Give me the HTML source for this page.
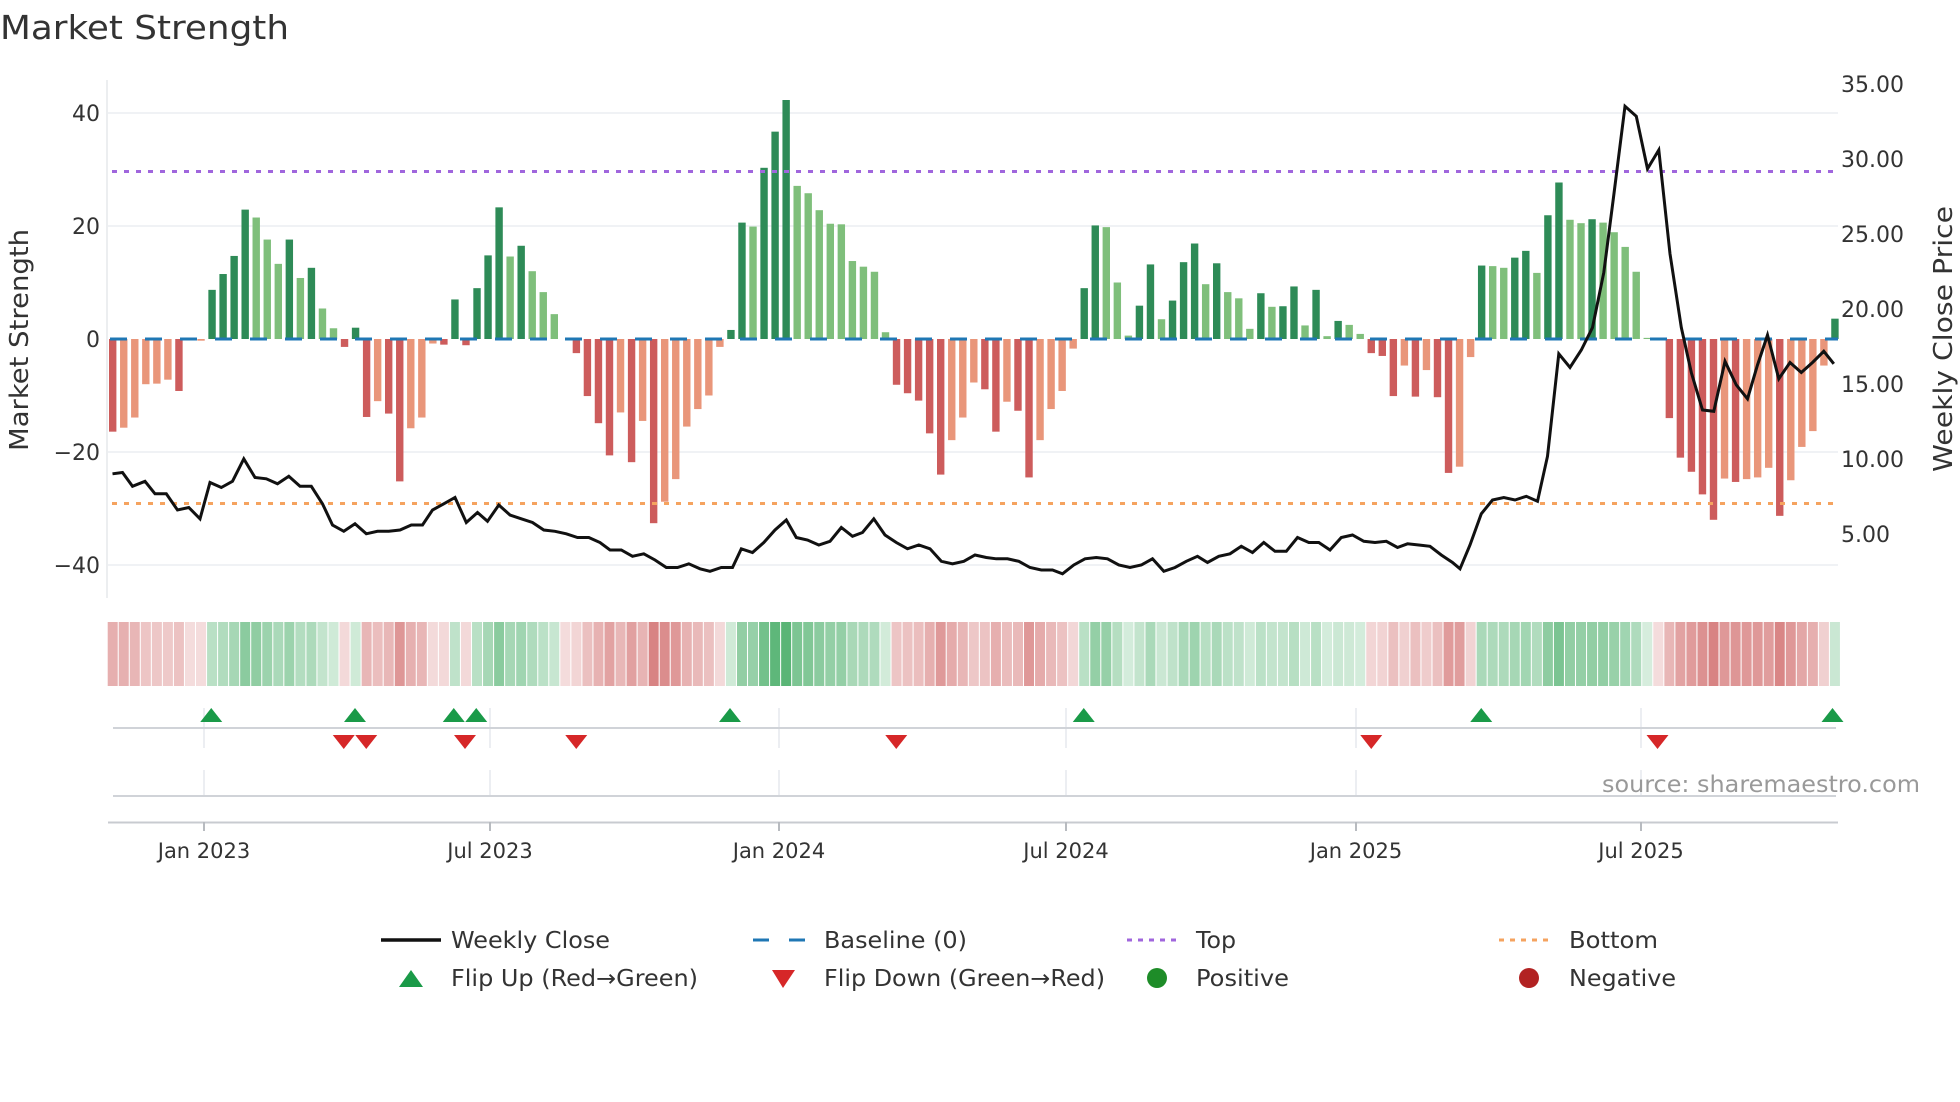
<!DOCTYPE html>
<html><head><meta charset="utf-8"><style>
html,body{margin:0;padding:0;background:#fff;}
svg{display:block;font-family:"DejaVu Sans","Liberation Sans",sans-serif;}
</style></head><body>
<svg id="s" width="1960" height="1102" viewBox="0 0 1960 1102" xmlns="http://www.w3.org/2000/svg">
<rect width="1960" height="1102" fill="#fff"/>
<text x="0" y="39" font-size="33" fill="#333" textLength="289" lengthAdjust="spacingAndGlyphs">Market Strength</text>
<g stroke="#eceef2" stroke-width="1.5">
<line x1="108" y1="113" x2="1838" y2="113"/>
<line x1="108" y1="226" x2="1838" y2="226"/>
<line x1="108" y1="452" x2="1838" y2="452"/>
<line x1="108" y1="565" x2="1838" y2="565"/>
</g>
<line x1="107" y1="80" x2="107" y2="598" stroke="#e6e8ec" stroke-width="1.5"/>
<g font-size="22" fill="#333" text-anchor="end">
<text x="100" y="121">40</text><text x="100" y="234">20</text><text x="100" y="347">0</text>
<text x="100" y="460">−20</text><text x="100" y="573">−40</text>
</g>
<g font-size="22" fill="#333">
<text x="1841" y="92">35.00</text><text x="1841" y="167">30.00</text><text x="1841" y="242">25.00</text>
<text x="1841" y="317">20.00</text><text x="1841" y="392">15.00</text><text x="1841" y="467">10.00</text>
<text x="1841" y="542">5.00</text>
</g>
<text transform="translate(28,451) rotate(-90)" font-size="26" fill="#333" textLength="222" lengthAdjust="spacingAndGlyphs">Market Strength</text>
<text transform="translate(1952,472) rotate(-90)" font-size="26" fill="#333" textLength="266" lengthAdjust="spacingAndGlyphs">Weekly Close Price</text>
<g id="bars"></g>
<line x1="110" y1="339" x2="1838" y2="339" stroke="#1f77b4" stroke-width="3" stroke-dasharray="17 18"/>
<line x1="112" y1="171.5" x2="1838" y2="171.5" stroke="#a066dd" stroke-width="3" stroke-dasharray="5 7"/>
<line x1="112" y1="503.5" x2="1838" y2="503.5" stroke="#f5a35f" stroke-width="3" stroke-dasharray="5 7"/>
<polyline id="price" fill="none" stroke="#111" stroke-width="3" stroke-linejoin="miter"/>
<g id="heat"></g>
<g stroke="#e6e8ee" stroke-width="1.5">
<line x1="204" y1="708" x2="204" y2="748"/><line x1="490" y1="708" x2="490" y2="748"/><line x1="779" y1="708" x2="779" y2="748"/>
<line x1="1066" y1="708" x2="1066" y2="748"/><line x1="1356" y1="708" x2="1356" y2="748"/><line x1="1641" y1="708" x2="1641" y2="748"/>
<line x1="204" y1="770" x2="204" y2="796"/><line x1="490" y1="770" x2="490" y2="796"/><line x1="779" y1="770" x2="779" y2="796"/>
<line x1="1066" y1="770" x2="1066" y2="796"/><line x1="1356" y1="770" x2="1356" y2="796"/><line x1="1641" y1="770" x2="1641" y2="796"/>
</g>
<line x1="113" y1="728" x2="1836" y2="728" stroke="#d0d3d8" stroke-width="2"/>
<line x1="113" y1="796" x2="1836" y2="796" stroke="#d0d3d8" stroke-width="2"/>
<line x1="108" y1="822.5" x2="1838" y2="822.5" stroke="#c8cbd0" stroke-width="2"/>
<g stroke="#b8bbc0" stroke-width="2">
<line x1="204" y1="822" x2="204" y2="831"/><line x1="490" y1="822" x2="490" y2="831"/><line x1="779" y1="822" x2="779" y2="831"/>
<line x1="1066" y1="822" x2="1066" y2="831"/><line x1="1356" y1="822" x2="1356" y2="831"/><line x1="1641" y1="822" x2="1641" y2="831"/>
</g>
<g id="tri"></g>
<text x="1602" y="792" font-size="23" fill="#999" textLength="318" lengthAdjust="spacingAndGlyphs">source: sharemaestro.com</text>
<g font-size="21" fill="#333" text-anchor="middle">
<text x="204" y="858">Jan 2023</text><text x="490" y="858">Jul 2023</text><text x="779" y="858">Jan 2024</text>
<text x="1066" y="858">Jul 2024</text><text x="1356" y="858">Jan 2025</text><text x="1641" y="858">Jul 2025</text>
</g>
<g font-size="23" fill="#333">
<line x1="381" y1="940" x2="441" y2="940" stroke="#111" stroke-width="3.5"/>
<text x="451" y="948" textLength="159" lengthAdjust="spacingAndGlyphs">Weekly Close</text>
<line x1="753" y1="940" x2="809" y2="940" stroke="#1f77b4" stroke-width="3" stroke-dasharray="16 20"/>
<text x="824" y="948" textLength="143" lengthAdjust="spacingAndGlyphs">Baseline (0)</text>
<line x1="1127" y1="940" x2="1182" y2="940" stroke="#a066dd" stroke-width="3" stroke-dasharray="5 6"/>
<text x="1196" y="948" textLength="40" lengthAdjust="spacingAndGlyphs">Top</text>
<line x1="1499" y1="940" x2="1554" y2="940" stroke="#f5a35f" stroke-width="3" stroke-dasharray="5 6"/>
<text x="1569" y="948" textLength="89" lengthAdjust="spacingAndGlyphs">Bottom</text>
<polygon points="399,987 423,987 411,970" fill="#1a9a48"/>
<text x="451" y="986" textLength="247" lengthAdjust="spacingAndGlyphs">Flip Up (Red→Green)</text>
<polygon points="772,970 795,970 783,988" fill="#d62728"/>
<text x="824" y="986" textLength="281" lengthAdjust="spacingAndGlyphs">Flip Down (Green→Red)</text>
<circle cx="1157" cy="978" r="10" fill="#1e8c28"/>
<text x="1196" y="986" textLength="93" lengthAdjust="spacingAndGlyphs">Positive</text>
<circle cx="1529" cy="978" r="10" fill="#b22222"/>
<text x="1569" y="986" textLength="107" lengthAdjust="spacingAndGlyphs">Negative</text>
</g>
</svg>
<script>
(function(){
var NS="http://www.w3.org/2000/svg";
var D=[["r",-16.4],["l",-15.7],["l",-13.9],["l",-8],["l",-7.9],["l",-7.2],["r",-9.2],["n",0],["l",-0.3],["g",8.7],
["g",11.5],["g",14.7],["g",22.9],["h",21.5],["h",17.6],["h",13.3],["g",17.6],["h",10.8],["g",12.6],["h",5.4],
["h",1.9],["r",-1.4],["g",2],["r",-13.8],["l",-11],["r",-13.2],["r",-25.2],["l",-15.8],["l",-13.9],["l",-0.8],
["r",-1],["g",7],["r",-1.1],["g",9],["g",14.8],["g",23.3],["h",14.6],["g",16.5],["h",12],["h",8.3],
["h",4.4],["n",0],["r",-2.5],["r",-10.1],["r",-14.9],["r",-20.6],["l",-13],["r",-21.8],["l",-14.5],["r",-32.6],
["l",-28.8],["l",-24.8],["l",-15.5],["l",-12.4],["l",-10],["l",-1.4],["g",1.6],["g",20.6],["h",19.9],["g",30.3],
["g",36.7],["g",42.3],["h",27.1],["h",25.8],["h",22.8],["h",20.4],["h",20.3],["h",13.8],["h",12.8],["h",11.9],
["h",1.2],["r",-8.1],["r",-9.6],["r",-10.9],["r",-16.7],["r",-24],["l",-17.9],["l",-13.9],["l",-7.7],["r",-8.9],
["r",-16.4],["l",-11.1],["r",-12.7],["r",-24.5],["l",-17.9],["l",-12.4],["l",-9.2],["l",-1.7],["g",9],["g",20.1],
["h",19.8],["h",10],["h",0.6],["g",5.9],["g",13.2],["h",3.5],["g",6.8],["g",13.6],["g",16.9],["h",9.7],
["g",13.4],["h",8.3],["h",7.2],["h",1.8],["g",8.1],["h",5.7],["g",5.8],["g",9.3],["h",2.4],["g",8.7],
["h",0.5],["g",3.2],["h",2.5],["h",0.9],["r",-2.5],["r",-3],["r",-10.1],["l",-4.7],["r",-10.2],["l",-5.5],
["r",-10.3],["r",-23.7],["l",-22.6],["l",-3.2],["g",13],["h",12.9],["h",12.6],["g",14.4],["g",15.6],["h",11.7],
["g",21.9],["g",27.7],["h",21.1],["h",20.5],["g",21.2],["h",20.6],["h",18.9],["h",16.3],["h",11.9],["h",0.2],
["n",0],["r",-14],["r",-21],["r",-23.5],["r",-27.5],["r",-32],["l",-24.7],["r",-25.3],["l",-24.8],["l",-24.5],
["l",-22.8],["r",-31.3],["l",-25],["l",-19.1],["l",-16.3],["l",-4.7],["g",3.6]];
var C={g:"#2e8b57",h:"#7fbf7b",r:"#cd5c5c",l:"#e9967a",n:"#fff"};
var bars=document.getElementById("bars"),heat=document.getElementById("heat");
for(var i=0;i<D.length;i++){
 var x=112.7+i*11.04,v=D[i][1],h=Math.abs(v)*5.65;
 if(h>0.5){var r=document.createElementNS(NS,"rect");
  r.setAttribute("x",(x-3.7).toFixed(2));r.setAttribute("width","7.4");
  r.setAttribute("y",(v>0?339-h:339).toFixed(2));r.setAttribute("height",h.toFixed(2));
  r.setAttribute("fill",C[D[i][0]]);bars.appendChild(r);}
 var c=document.createElementNS(NS,"rect");
 c.setAttribute("x",(x-5).toFixed(2));c.setAttribute("width","10");
 c.setAttribute("y","622");c.setAttribute("height","64");
 var a=0.2+0.6*Math.min(Math.abs(v)/38,1);
 c.setAttribute("fill",(v>0?"rgba(49,163,84,":"rgba(200,80,80,")+a.toFixed(2)+")");
 heat.appendChild(c);
}
var P=[90,379,98,378,106,389,116,385,124,395,133,395,142,408,151,406,160,415,168,386,177,390,186,385,195,367,204,382,213,383,222,387,231,381,240,389,249,389,258,403,266,420,275,425,284,419,293,427,302,425,311,425,320,424,329,420,338,420,346,408,355,403,364,398,373,418,382,410,390,417,399,404,408,412,417,415,426,418,435,424,444,425,453,427,462,430,471,430,480,434,488,440,497,440,506,445,515,443,524,448,533,454,542,454,551,451,560,455,568,457,577,454,586,454,593,439,602,442,611,434,620,424,629,416,637,430,646,432,655,436,664,433,673,422,682,429,690,426,699,415,708,428,717,434,726,439,735,436,744,439,753,449,762,451,771,449,780,444,789,446,797,447,806,447,815,449,824,454,833,456,842,456,850,459,859,452,868,447,877,446,886,447,895,452,904,454,913,452,922,447,931,457,940,454,949,449,958,445,966,450,975,445,984,443,993,437,1002,442,1011,434,1020,441,1029,441,1038,430,1047,434,1055,434,1064,440,1073,430,1082,428,1091,433,1100,434,1109,433,1118,438,1126,435,1135,436,1144,437,1153,444,1162,450,1168,455,1176,436,1185,411,1194,400,1203,398,1212,400,1221,397,1230,401,1238,365,1247,283,1256,294,1265,280,1274,262,1283,218,1291,156,1300,85,1309,93,1318,135,1327,120,1336,203,1345,262,1353,298,1362,328,1371,329,1380,289,1389,308,1398,319,1406,292,1414,268,1423,303,1432,290,1441,298,1450,290,1459,281,1467,291];
var s="";for(var j=0;j<P.length;j+=2){s+=(P[j]*1.25).toFixed(1)+","+(P[j+1]*1.25).toFixed(1)+" ";}
document.getElementById("price").setAttribute("points",s);
var tri=document.getElementById("tri");
var U=[169,284,363,381,584,867,1185,1466],W=[275,293,372,461,717,1097,1326];
U.forEach(function(d){var x=d*1.25,p=document.createElementNS(NS,"polygon");
 p.setAttribute("points",(x-11)+",722 "+(x+11)+",722 "+x+",708");p.setAttribute("fill","#1a9a48");tri.appendChild(p);});
W.forEach(function(d){var x=d*1.25,p=document.createElementNS(NS,"polygon");
 p.setAttribute("points",(x-11)+",735 "+(x+11)+",735 "+x+",749");p.setAttribute("fill","#d62728");tri.appendChild(p);});
})();
</script>
</body></html>
